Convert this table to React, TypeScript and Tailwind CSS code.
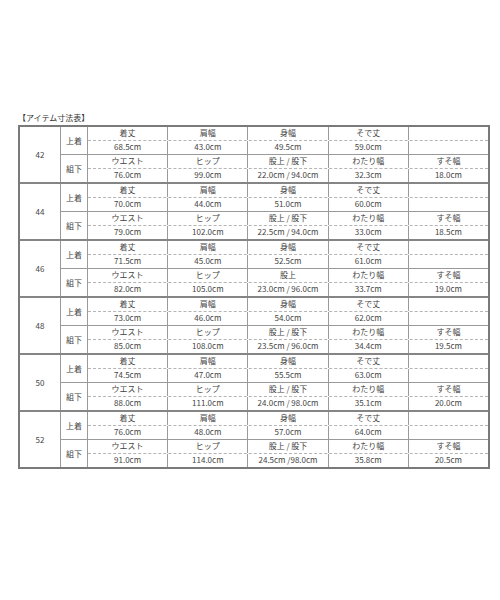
import React from "react";

type Group = {
  size: string;
  top: string[];
  bottom: string[];
};

const topHeaders = ["着丈", "肩幅", "身幅", "そで丈", ""];
const bottomHeaders = ["ウエスト", "ヒップ", "股上 / 股下", "わたり幅", "すそ幅"];

const groups: Group[] = [
  { size: "42", top: ["68.5cm", "43.0cm", "49.5cm", "59.0cm", ""], bottom: ["76.0cm", "99.0cm", "22.0cm / 94.0cm", "32.3cm", "18.0cm"] },
  { size: "44", top: ["70.0cm", "44.0cm", "51.0cm", "60.0cm", ""], bottom: ["79.0cm", "102.0cm", "22.5cm / 94.0cm", "33.0cm", "18.5cm"] },
  { size: "46", top: ["71.5cm", "45.0cm", "52.5cm", "61.0cm", ""], bottom: ["82.0cm", "105.0cm", "23.0cm / 96.0cm", "33.7cm", "19.0cm"] },
  { size: "48", top: ["73.0cm", "46.0cm", "54.0cm", "62.0cm", ""], bottom: ["85.0cm", "108.0cm", "23.5cm / 96.0cm", "34.4cm", "19.5cm"] },
  { size: "50", top: ["74.5cm", "47.0cm", "55.5cm", "63.0cm", ""], bottom: ["88.0cm", "111.0cm", "24.0cm / 98.0cm", "35.1cm", "20.0cm"] },
  { size: "52", top: ["76.0cm", "48.0cm", "57.0cm", "64.0cm", ""], bottom: ["91.0cm", "114.0cm", "24.5cm /98.0cm", "35.8cm", "20.5cm"] },
];

// group 46 uses a plain 股上 header in the source
const headerFor = (size: string) =>
  size === "46" ? ["ウエスト", "ヒップ", "股上", "わたり幅", "すそ幅"] : bottomHeaders;

function Row({ cells, dashed }: { cells: string[]; dashed?: boolean }) {
  return (
    <div className={`flex h-[13.5px] ${dashed ? "border-b border-dashed border-[#b5b5b5]" : ""}`}>
      {cells.map((c, i) => (
        <div
          key={i}
          className={`flex flex-1 items-center justify-center leading-none ${i < cells.length - 1 ? "border-r border-[#9a9a9a]" : ""}`}
        >
          {c}
        </div>
      ))}
    </div>
  );
}

function Part({ label, headers, values, last }: { label: string; headers: string[]; values: string[]; last?: boolean }) {
  return (
    <div className={`flex ${last ? "" : "border-b border-[#9a9a9a]"}`}>
      <div className="flex w-[27px] shrink-0 items-center justify-center border-r border-[#9a9a9a]">{label}</div>
      <div className="flex flex-1 flex-col">
        <Row cells={headers} dashed />
        <Row cells={values} />
      </div>
    </div>
  );
}

export default function App() {
  return (
    <div
      className="min-h-[600px] bg-white pl-[18px] pt-[113px] text-[8px] text-[#444]"
      style={{ fontFamily: '"Noto Sans CJK JP", "Liberation Sans", sans-serif' }}
    >
      <p className="mb-[2px] h-[10px] text-[8px] leading-[10px] text-[#333]">【アイテム寸法表】</p>
      <div className="w-[472px] border-2 border-[#7a7a7a]">
        {groups.map((g, gi) => (
          <div key={g.size} className={`flex ${gi > 0 ? "border-t-2 border-[#858585]" : ""}`}>
            <div className="flex w-[41px] shrink-0 items-center justify-center border-r border-[#9a9a9a]">{g.size}</div>
            <div className="flex flex-1 flex-col">
              <Part label="上着" headers={topHeaders} values={g.top} />
              <Part label="組下" headers={headerFor(g.size)} values={g.bottom} last />
            </div>
          </div>
        ))}
      </div>
    </div>
  );
}
